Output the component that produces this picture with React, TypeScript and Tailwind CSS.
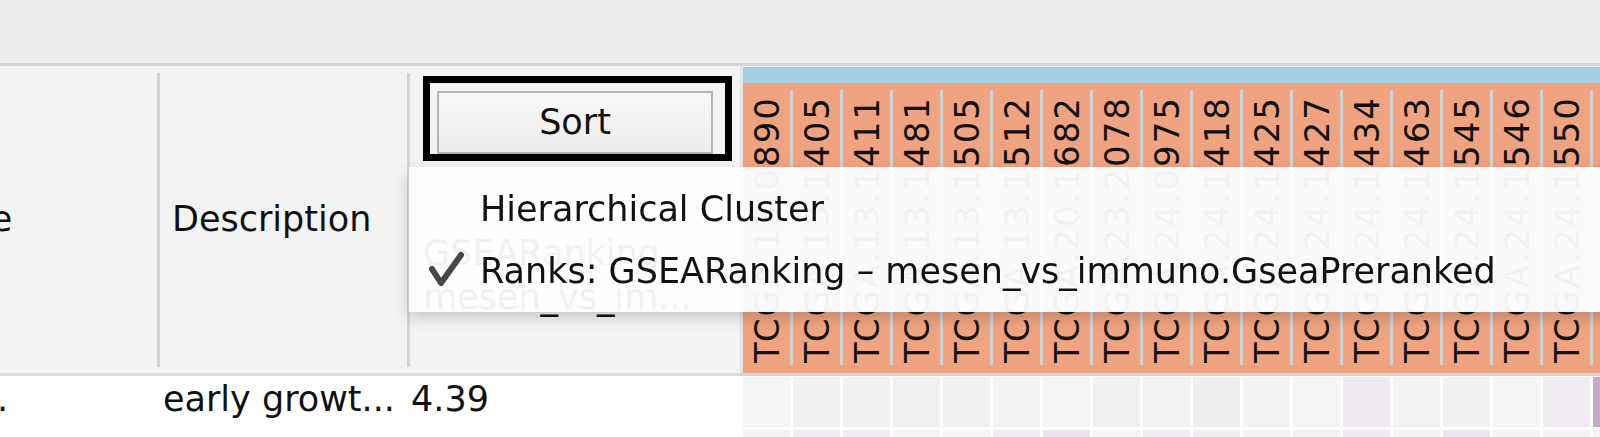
import React from "react";

const samples = [
  "TCGA.13.0890",
  "TCGA.13.1405",
  "TCGA.13.1411",
  "TCGA.13.1481",
  "TCGA.13.1505",
  "TCGA.13.1512",
  "TCGA.20.1682",
  "TCGA.23.2078",
  "TCGA.24.0975",
  "TCGA.24.1418",
  "TCGA.24.1425",
  "TCGA.24.1427",
  "TCGA.24.1434",
  "TCGA.24.1463",
  "TCGA.24.1545",
  "TCGA.24.1546",
  "TCGA.24.1550",
  "TCGA.24.1552",
];

// first two heatmap rows (only the top one is fully in view)
const rowOne = [
  "#f5f5f5", "#f0f1f0", "#f0f1f0", "#f2f0f3", "#f0f1f0", "#f3f3f3",
  "#f4f4f4", "#f0f1f0", "#f1f2f1", "#f1eef2", "#f3f3f3", "#f4f4f4",
  "#efeaf0", "#f2f3f2", "#f0f1f0", "#f5f5f5", "#f0ecf1", "#c7a9cc",
];
const rowTwo = [
  "#f2f3f2", "#f0ecf1", "#f0ecf1", "#f4f4f4", "#f5f5f5", "#f0ecf1",
  "#ece3ee", "#f5f5f5", "#f0ecf1", "#f1eef2", "#f3f3f3", "#f1f2f1",
  "#f0e9f1", "#f3f3f3", "#ece4ee", "#f3f3f3", "#f3f3f3", "#f3f3f3",
];

const HeatRow: React.FC<{ colors: string[] }> = ({ colors }) => (
  <div className="flex h-[50px]">
    {colors.map((c, i) => (
      <div key={i} className="flex shrink-0">
        <div className="w-[3px] bg-white" />
        <div className="w-[47px]" style={{ backgroundColor: c }} />
      </div>
    ))}
  </div>
);

const App: React.FC = () => {
  return (
    <div className="relative h-[437px] w-[1600px] overflow-hidden bg-white font-['DejaVu_Sans',sans-serif] text-[#111]">
      <div className="h-[63px] bg-[#ededed]" />
      <div className="h-[3px] bg-[#d6d6d6]" />

      <div className="flex">
        {/* table part */}
        <div className="w-[740px] shrink-0">
          <div className="flex h-[307px] bg-[#f3f3f3] text-[35px] leading-[35px]">
            <div className="flex w-[157px] items-center overflow-hidden">
              <span className="-ml-[91px] whitespace-nowrap">Name</span>
            </div>
            <div className="mt-[7px] mb-[6px] w-[3px] bg-[#d3d3d3]" />
            <div className="flex w-[247px] items-center pl-[12px]">
              Description
            </div>
            <div className="mt-[7px] mb-[6px] w-[3px] bg-[#d3d3d3]" />
            <div className="flex w-[330px] flex-col pt-[10px] pl-[13px]">
              <div className="h-[85px] w-[309px] border-[7px] border-black">
                <div className="mt-[8px] mr-[12px] ml-[7px] flex h-[63px] items-center justify-center border-2 border-[#b4b4b4] bg-gradient-to-b from-[#f8f8f8] to-[#ececec]">
                  Sort
                </div>
              </div>
              <div className="mt-[75px] whitespace-nowrap">GSEARanking</div>
              <div className="mt-[9px] whitespace-nowrap">mesen_vs_im...</div>
            </div>
          </div>
          <div className="h-[3px] bg-[#dadada]" />
          <div className="flex h-[60px] pt-[6px] text-[35px] leading-[35px]">
            <div className="w-[160px] overflow-hidden">
              <span className="-ml-[3px]">.</span>
            </div>
            <div className="w-[250px] pl-[3px] whitespace-nowrap">
              early growt...
            </div>
            <div className="pl-[1px]">4.39</div>
          </div>
        </div>

        {/* heatmap part */}
        <div className="min-w-0 flex-1 overflow-hidden">
          <div className="flex h-[307px]">
            <div className="w-[3px] shrink-0 bg-[#e4e4e4]" />
            <div className="flex flex-1 flex-col bg-[#f3f3f3] pt-[1px]">
              <div className="h-[16px] bg-[#a4cee2]" />
              <div className="flex h-[290px] bg-[#f0a381]">
                {samples.map((s) => (
                  <div key={s} className="flex shrink-0">
                    <div className="flex w-[47px] flex-col items-center justify-end overflow-hidden pb-[10px]">
                      <span className="rotate-180 text-[34px] leading-none tracking-[2px] whitespace-nowrap [writing-mode:vertical-rl]">
                        {s}
                      </span>
                    </div>
                    <div className="mt-[7px] mb-[8px] w-[3px] bg-[#d4d0ce]" />
                  </div>
                ))}
              </div>
            </div>
          </div>
          <div className="h-[3px] bg-[#d6d6d6]" />
          <div className="pt-[1px]">
            <HeatRow colors={rowOne} />
            <div className="h-[3px]" />
            <HeatRow colors={rowTwo} />
          </div>
        </div>
      </div>

      {/* sort popup menu */}
      <div className="absolute top-[167px] left-[408px] h-[145px] w-[1240px] border-l border-[#cfcfcf] bg-[#fefefe]/95 shadow-[0_6px_14px_rgba(0,0,0,0.18)] backdrop-grayscale">
        <svg
          className="absolute top-[83px] left-[19px]"
          width="37"
          height="38"
          viewBox="0 0 37 38"
          fill="none"
        >
          <path
            d="M4 19 L13 33 L33 5"
            stroke="#474747"
            strokeWidth="6"
            strokeLinecap="round"
            strokeLinejoin="round"
          />
        </svg>
        <div className="flex flex-col pt-[25px] pl-[71px] text-[35px] leading-[35px] whitespace-nowrap">
          <div>Hierarchical Cluster</div>
          <div className="mt-[27px]">
            Ranks: GSEARanking – mesen_vs_immuno.GseaPreranked
          </div>
        </div>
      </div>
    </div>
  );
};

export default App;
